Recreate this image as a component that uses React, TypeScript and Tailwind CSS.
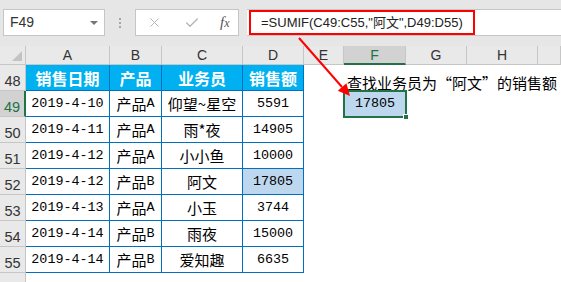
import { X, Check } from 'lucide-react'

const cols = [
  { key: 'A', w: 'w-[84px]' },
  { key: 'B', w: 'w-[52px]' },
  { key: 'C', w: 'w-[81px]' },
  { key: 'D', w: 'w-[61px]' },
  { key: 'E', w: 'w-[40px]' },
  { key: 'F', w: 'w-[62px]' },
  { key: 'G', w: 'w-[61px]' },
  { key: 'H', w: 'w-[71px]' },
  { key: '', w: 'flex-1' },
]

const rows = [
  { n: 49, date: '2019-4-10', product: '产品A', person: '仰望~星空', amount: '5591' },
  { n: 50, date: '2019-4-11', product: '产品A', person: '雨*夜', amount: '14905' },
  { n: 51, date: '2019-4-12', product: '产品A', person: '小小鱼', amount: '10000' },
  { n: 52, date: '2019-4-12', product: '产品B', person: '阿文', amount: '17805', hit: true },
  { n: 53, date: '2019-4-13', product: '产品A', person: '小玉', amount: '3744' },
  { n: 54, date: '2019-4-14', product: '产品B', person: '雨夜', amount: '15000' },
  { n: 55, date: '2019-4-14', product: '产品B', person: '爱知趣', amount: '6635' },
]

const ui = { fontFamily: '"Liberation Sans", "Noto Sans CJK SC", sans-serif' }
const mono = { fontFamily: '"Liberation Mono", "Noto Sans CJK SC", monospace' }
const cjk = { fontFamily: '"Noto Sans CJK SC", sans-serif' }

function RowHead({ n, active }: { n: number | string; active?: boolean }) {
  return (
    <div
      className={
        active
          ? 'w-[26px] shrink-0 flex items-end justify-center pb-[1px] bg-[#d2d2d2] border-b border-[#c6c6c6] border-r-2 border-r-[#217346] text-[14.5px] leading-none text-[#217346]'
          : 'w-[26px] shrink-0 flex items-end justify-center pb-[1px] bg-[#e9e9e9] border-b border-r border-[#c6c6c6] text-[14.5px] leading-none text-[#333]'
      }
      style={ui}
    >
      <span className="pb-[1px]">{n}</span>
    </div>
  )
}

const cell = 'shrink-0 flex items-center justify-center border-r border-b border-[#0070c0] text-black leading-none'

export default function App() {
  return (
    <div className="relative w-[561px] h-[282px] overflow-hidden bg-white select-none">
      {/* Toolbar */}
      <div className="h-[46px] bg-[#e6e6e6] flex items-start pt-[9px]">
        <div className="ml-[3px] w-[102px] h-[27px] bg-white border border-[#c6c6c6] flex items-center justify-between pl-[6px] pr-[6px]">
          <span className="text-[14px] text-[#333]" style={ui}>F49</span>
          <span className="w-0 h-0 border-l-[4px] border-r-[4px] border-t-[4px] border-l-transparent border-r-transparent border-t-[#777]" />
        </div>
        <div className="w-[30px] h-[27px] flex flex-col items-center justify-center gap-[2px]">
          <span className="w-[2px] h-[2px] bg-[#a6a6a6]" />
          <span className="w-[2px] h-[2px] bg-[#a6a6a6]" />
          <span className="w-[2px] h-[2px] bg-[#a6a6a6]" />
        </div>
        <div className="w-[104px] h-[27px] bg-white border border-[#c6c6c6] flex items-center pl-[11px]">
          <X className="w-[15px] h-[15px] text-[#b4b4b4]" strokeWidth={1.6} />
          <Check className="w-[16px] h-[16px] text-[#b4b4b4] ml-[22px]" strokeWidth={2} />
          <span className="ml-[20px] text-[15px] italic text-[#555]" style={{ fontFamily: '"Liberation Serif", serif' }}>
            f<span className="text-[12px]">x</span>
          </span>
        </div>
        <div className="ml-[8px] flex-1 h-[27px] bg-white border-y border-[#c6c6c6] flex items-stretch pl-[2px]">
          <div className="w-[226px] border-2 border-[#ff0000] flex items-center pl-[10px]">
            <span className="text-[13px] text-[#222] whitespace-nowrap" style={ui}>
              =SUMIF(C49:C55,"阿文",D49:D55)
            </span>
          </div>
        </div>
      </div>

      {/* Column headers */}
      <div className="flex h-[19px]">
        <div className="w-[26px] shrink-0 bg-[#e9e9e9] border-r border-b border-[#c6c6c6] relative">
          <span className="absolute right-[3px] bottom-[3px] w-0 h-0 border-t-[10px] border-t-transparent border-r-[10px] border-r-[#c3c3c3]" />
        </div>
        {cols.map((c, i) => (
          <div
            key={i}
            className={
              c.key === 'F'
                ? `${c.w} shrink-0 flex items-end justify-center bg-[#d2d2d2] border-r border-[#c6c6c6] border-b-2 border-b-[#217346] text-[14px] leading-none text-[#217346] pb-[1px]`
                : `${c.w} shrink-0 flex items-end justify-center bg-[#e9e9e9] border-r border-b border-[#c6c6c6] text-[14px] leading-none text-[#333] pb-[2px]`
            }
            style={ui}
          >
            {c.key}
          </div>
        ))}
      </div>

      {/* Row 48: table header */}
      <div className="flex h-[26px]">
        <RowHead n={48} />
        <div className={`${cell} w-[84px] bg-[#00b0f0] text-white font-bold text-[16px]`} style={cjk}>销售日期</div>
        <div className={`${cell} w-[52px] bg-[#00b0f0] text-white font-bold text-[16px]`} style={cjk}>产品</div>
        <div className={`${cell} w-[81px] bg-[#00b0f0] text-white font-bold text-[16px]`} style={cjk}>业务员</div>
        <div className={`${cell} w-[61px] bg-[#00b0f0] text-white font-bold text-[16px]`} style={cjk}>销售额</div>
        <div className="w-[40px] shrink-0" />
        <div className="w-[62px] shrink-0 flex items-end pl-[3px] pb-[1px]">
          <span className="text-[15px] leading-none whitespace-nowrap text-black" style={cjk}>
            查找业务员为“阿文”的销售额
          </span>
        </div>
      </div>

      {/* Data rows */}
      {rows.map((r) => (
        <div key={r.n} className="flex h-[26px]">
          <RowHead n={r.n} active={r.n === 49} />
          <div className={`${cell} w-[84px] text-[13.4px]`} style={mono}>{r.date}</div>
          <div className={`${cell} w-[52px] text-[15px]`} style={cjk}>
            {r.product.slice(0, 2)}
            <span className="text-[13.4px]" style={mono}>{r.product.slice(2)}</span>
          </div>
          <div className={`${cell} w-[81px] text-[15px]`} style={cjk}>{r.person}</div>
          <div className={`${cell} w-[61px] text-[13.4px] ${r.hit ? 'bg-[#bdd7ee]' : ''}`} style={mono}>{r.amount}</div>
          <div className="w-[40px] shrink-0" />
          {r.n === 49 ? (
            <div className="relative w-[62px] shrink-0 flex items-center justify-center bg-[#bdd7ee] text-[13.4px] text-black leading-none" style={mono}>
              17805
              <span className="absolute -left-[1px] -top-[1px] -right-[1px] -bottom-[1px] border-2 border-[#217346]" />
              <span className="absolute -right-[3px] -bottom-[3px] w-[6px] h-[6px] bg-[#217346] border border-white" />
            </div>
          ) : null}
        </div>
      ))}

      {/* Partial row */}
      <div className="flex h-[9px]">
        <div className="w-[26px] shrink-0 bg-[#e9e9e9] border-r border-[#c6c6c6]" />
      </div>

      {/* Red arrow annotation */}
      <svg className="absolute left-0 top-0 pointer-events-none" width="561" height="282">
        <line x1="299" y1="38" x2="342" y2="87" stroke="#ff0000" strokeWidth="2" />
        <polygon points="350,96 337.8,90.8 346.4,83.2" fill="#ff0000" />
      </svg>
    </div>
  )
}
